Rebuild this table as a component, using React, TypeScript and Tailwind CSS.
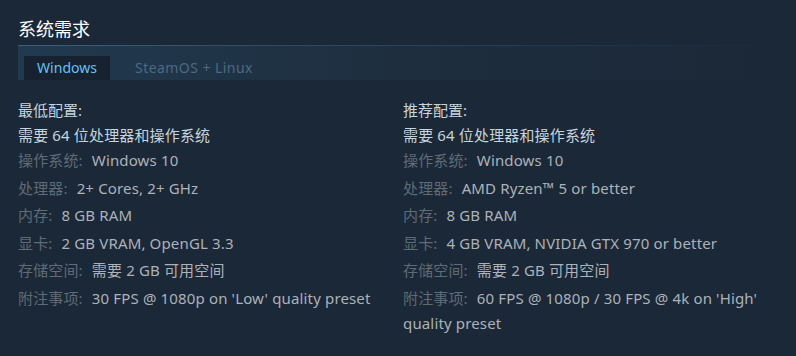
const font = "font-['Noto_Sans','Noto_Sans_CJK_SC',sans-serif]";

type Row = { label?: string; value: string };

const minimum: Row[] = [
  { value: "需要 64 位处理器和操作系统" },
  { label: "操作系统:", value: "Windows 10" },
  { label: "处理器:", value: "2+ Cores, 2+ GHz" },
  { label: "内存:", value: "8 GB RAM" },
  { label: "显卡:", value: "2 GB VRAM, OpenGL 3.3" },
  { label: "存储空间:", value: "需要 2 GB 可用空间" },
  { label: "附注事项:", value: "30 FPS @ 1080p on 'Low' quality preset" },
];

const recommended: Row[] = [
  { value: "需要 64 位处理器和操作系统" },
  { label: "操作系统:", value: "Windows 10" },
  { label: "处理器:", value: "AMD Ryzen™ 5 or better" },
  { label: "内存:", value: "8 GB RAM" },
  { label: "显卡:", value: "4 GB VRAM, NVIDIA GTX 970 or better" },
  { label: "存储空间:", value: "需要 2 GB 可用空间" },
  { label: "附注事项:", value: "60 FPS @ 1080p / 30 FPS @ 4k on 'High' quality preset" },
];

function Column({ title, rows }: { title: string; rows: Row[] }) {
  return (
    <div className="w-[385px] flex-none pr-4">
      <div className="text-[15px] leading-[25px] text-[#c6d4df]">{title}</div>
      <ul className="text-[15px] leading-[25px] text-[#acb2b8] tracking-[0.15px]">
        {rows.map((r, i) => (
          <li key={i} className={i === 0 ? "mb-0 text-[#c6d4df]" : "mb-[2.5px]"}>
            {r.label && <span className="text-[#5f6b75] mr-[9px]">{r.label}</span>}
            {r.value}
          </li>
        ))}
      </ul>
    </div>
  );
}

export default function App() {
  return (
    <div className={`w-[796px] h-[356px] bg-[#1b2838] ${font} overflow-hidden`}>
      <div className="pl-[18px] pr-4">
        <h2 className="pt-[17px] text-[18px] leading-[24px] text-[#ffffff] font-normal">系统需求</h2>
        <div className="mt-[4px] h-px bg-gradient-to-r from-[#3d6078] via-[#2a4558] to-transparent" />
        <div className="h-[34px] bg-gradient-to-r from-[#213a4f] via-[#1e2e3f] to-[#1b2838] flex items-end pl-[6px]">
          <div className="h-[24px] w-[86px] bg-[#16222f] text-[#67c1f5] text-[14px] leading-[24px] text-center">Windows</div>
          <div className="h-[24px] ml-[25px] text-[#4c6a82] text-[14px] leading-[24px] tracking-[0.45px]">SteamOS + Linux</div>
        </div>
        <div className="mt-[18px] flex">
          <Column title="最低配置:" rows={minimum} />
          <Column title="推荐配置:" rows={recommended} />
        </div>
      </div>
    </div>
  );
}
